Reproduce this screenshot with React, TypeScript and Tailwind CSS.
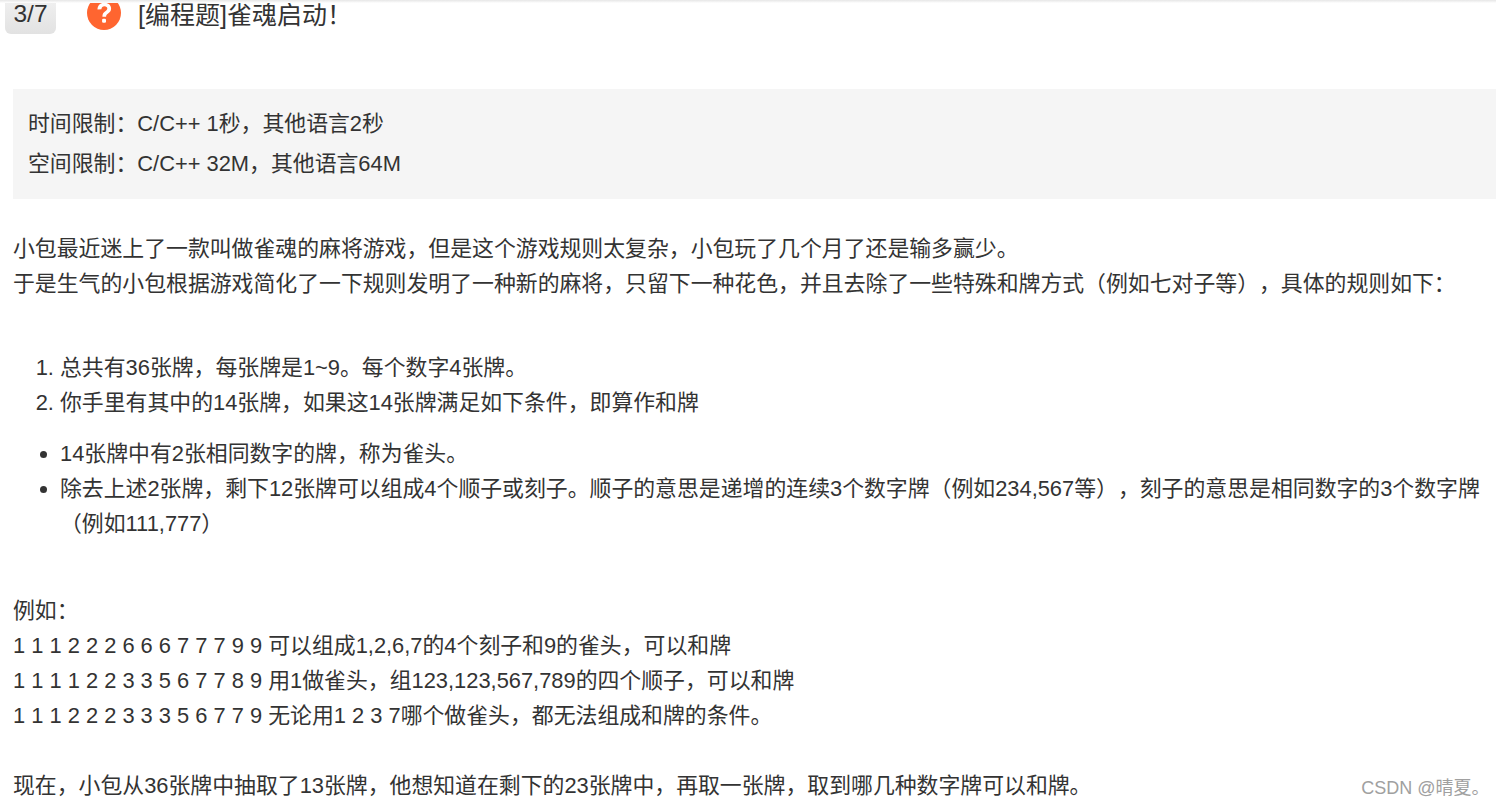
export default function App() {
  return (
    <div className="relative h-[807px] w-[1496px] overflow-hidden bg-white text-[21.87px] leading-[35px] text-[#333333] [text-spacing-trim:space-all] [font-family:'Liberation_Sans','Noto_Sans_CJK_SC',sans-serif]">
      <div className="absolute inset-x-0 top-0 z-10 h-[3px] bg-gradient-to-b from-[#e6e6e6] to-white" />
      <div className="flex h-[34px] items-start">
        <div className="ml-[5px] flex h-[34px] w-[51px] items-center justify-center rounded-b-[6px] bg-gradient-to-b from-[#f0f0f0] to-[#e2e2e2] pb-[6px] text-[24.5px] leading-[28px]">3/7</div>
        <svg className="-mt-[4px] ml-[31px]" width="34" height="34" viewBox="0 0 34 34">
          <circle cx="17" cy="17" r="17" fill="#ff6530" />
          <path d="M10.500 13.500c0-4.200 2.900-6.700 6.900-6.700 3.900 0 6.700 2.300 6.700 5.700 0 2.500-1.300 3.800-3 5-1.500 1-2 1.700-2 3.300h-3.700c0-2.800.8-4 2.600-5.300 1.500-1.100 2.300-1.700 2.300-2.900 0-1.400-1.200-2.300-2.800-2.300-1.800 0-3 1.200-3.100 3z" fill="#fff" />
          <rect x="15.100" y="22.800" width="3.900" height="3.900" rx="1.200" fill="#fff" />
        </svg>
        <div className="-mt-[2px] ml-[17px] text-[25px] leading-[35px]">[编程题]雀魂启动！</div>
      </div>
      <div className="ml-[13px] mt-[55px] h-[110px] bg-[#f5f5f5] pl-[15px] pt-[15px] leading-[40px]">
        <div>时间限制：C/C++ 1秒，其他语言2秒</div>
        <div>空间限制：C/C++ 32M，其他语言64M</div>
      </div>
      <div className="ml-[13px] mt-[32px]">
        <div>小包最近迷上了一款叫做雀魂的麻将游戏，但是这个游戏规则太复杂，小包玩了几个月了还是输多赢少。</div>
        <div>于是生气的小包根据游戏简化了一下规则发明了一种新的麻将，只留下一种花色，并且去除了一些特殊和牌方式（例如七对子等），具体的规则如下：</div>
      </div>
      <ol className="mt-[49px] list-decimal pl-[60px]">
        <li>总共有36张牌，每张牌是1~9。每个数字4张牌。</li>
        <li>你手里有其中的14张牌，如果这14张牌满足如下条件，即算作和牌</li>
      </ol>
      <ul className="mt-[16px] list-disc pl-[60px] pr-[14px]">
        <li>14张牌中有2张相同数字的牌，称为雀头。</li>
        <li>除去上述2张牌，剩下12张牌可以组成4个顺子或刻子。顺子的意思是递增的连续3个数字牌（例如234,567等），刻子的意思是相同数字的3个数字牌（例如111,777）</li>
      </ul>
      <div className="ml-[13px] mt-[52px]">
        <div>例如：</div>
        <div>1 1 1 2 2 2 6 6 6 7 7 7 9 9 可以组成1,2,6,7的4个刻子和9的雀头，可以和牌</div>
        <div>1 1 1 1 2 2 3 3 5 6 7 7 8 9 用1做雀头，组123,123,567,789的四个顺子，可以和牌</div>
        <div>1 1 1 2 2 2 3 3 3 5 6 7 7 9 无论用1 2 3 7哪个做雀头，都无法组成和牌的条件。</div>
        <div className="mt-[35px]">现在，小包从36张牌中抽取了13张牌，他想知道在剩下的23张牌中，再取一张牌，取到哪几种数字牌可以和牌。</div>
      </div>
      <div className="absolute right-[6.5px] bottom-[7px] text-[18px] leading-[24px] text-[#a0a0a0]">CSDN @晴夏。</div>
    </div>
  );
}
